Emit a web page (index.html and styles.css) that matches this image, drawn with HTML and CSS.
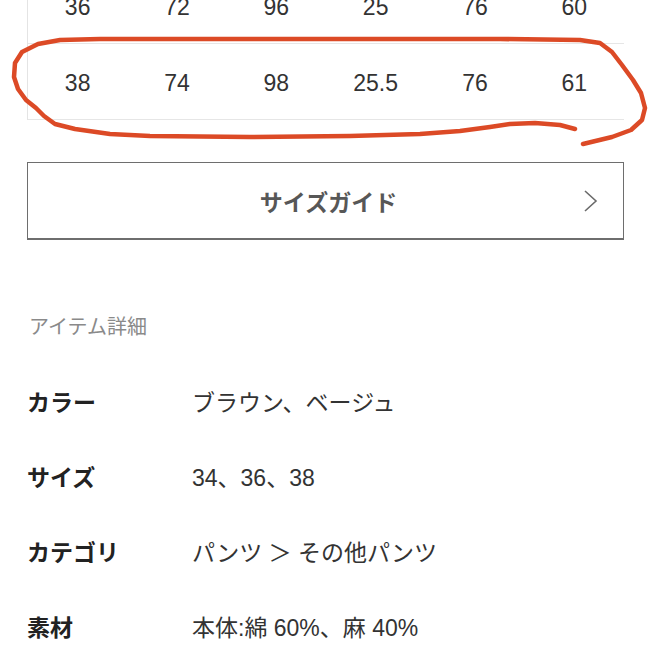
FILE: index.html
```html
<!DOCTYPE html>
<html lang="ja">
<head>
<meta charset="utf-8">
<link rel="stylesheet" href="styles.css">
</head>
<body>
<div class="page">
  <div class="size-table">
    <div class="row"><span>36</span><span>72</span><span>96</span><span>25</span><span>76</span><span>60</span></div>
    <div class="row"><span>38</span><span>74</span><span>98</span><span>25.5</span><span>76</span><span>61</span></div>
  </div>

  <div class="guide-btn">
    <span></span>
    <span class="guide-label">サイズガイド</span>
    <svg class="chevron" width="16" height="24" viewBox="0 0 16 24"><path d="M2 2 L13 12 L2 22" fill="none" stroke="#6a6a6a" stroke-width="1.6"/></svg>
  </div>

  <h2 class="section-title">アイテム詳細</h2>

  <dl class="details">
    <dt>カラー</dt><dd>ブラウン、ベージュ</dd>
    <dt>サイズ</dt><dd>34、36、38</dd>
    <dt>カテゴリ</dt><dd>パンツ ＞ その他パンツ</dd>
    <dt>素材</dt><dd>本体:綿 60%、麻 40%</dd>
  </dl>
</div>

<svg class="scribble" width="651" height="160" viewBox="0 0 651 160">
  <path d="M575 129 L560 125 L535 123 L510 124 L490 127 L460 131 L420 134 L350 136 L250 137 L150 136 L110 134 L75 129 L55 124 L44 116 L36 108 L26 100 L18 89 L14 77 L15 63 L22 52 L38 44 L60 40 L100 39 L300 39 L500 39 L580 40 L600 43 L612 52 L622 65 L633 80 L641 93 L645 108 L642 120 L631 130 L612 137 L583 144" fill="none" stroke="#dc4a26" stroke-width="4.5" stroke-linecap="round" stroke-linejoin="round"/>
</svg>
</body>
</html>
```

FILE: styles.css
```css
html, body {
  margin: 0;
  padding: 0;
  background: #ffffff;
  overflow: hidden;
}

body {
  position: relative;
  width: 651px;
  height: 651px;
  font-family: "Liberation Sans", "Noto Sans CJK JP", sans-serif;
  color: #333333;
}

.page {
  padding: 0 27px;
}

.size-table {
  margin-top: -32px;
  border-left: 1px solid #e4e4e4;
}

.row {
  display: grid;
  grid-template-columns: repeat(6, 1fr);
  height: 72px;
  padding-top: 3px;
  box-sizing: content-box;
  border-bottom: 1px solid #e6e6e6;
}

.row span {
  text-align: center;
  font-size: 23px;
  line-height: 72px;
  color: #333333;
}

.guide-btn {
  margin-top: 42px;
  height: 78px;
  box-sizing: border-box;
  border: 1px solid #6e6e6e;
  border-bottom-width: 2px;
  display: grid;
  grid-template-columns: 1fr auto 1fr;
  align-items: center;
}

.guide-label {
  font-size: 23px;
  font-weight: bold;
  color: #575757;
  padding-left: 6px;
}

.chevron {
  justify-self: end;
  margin-right: 24px;
}

.section-title {
  margin: 72px 0 0 2px;
  font-size: 20px;
  line-height: 30px;
  font-weight: normal;
  color: #8a8a8a;
}

.details {
  margin: 46px 0 0 0;
  display: grid;
  grid-template-columns: 165px 1fr;
  row-gap: 45px;
  font-size: 23px;
  line-height: 30px;
}

.details dt {
  font-weight: bold;
  color: #222222;
}

.details dd {
  margin: 0;
  color: #333333;
}

.scribble {
  position: absolute;
  left: 0;
  top: 0;
  pointer-events: none;
}
```
